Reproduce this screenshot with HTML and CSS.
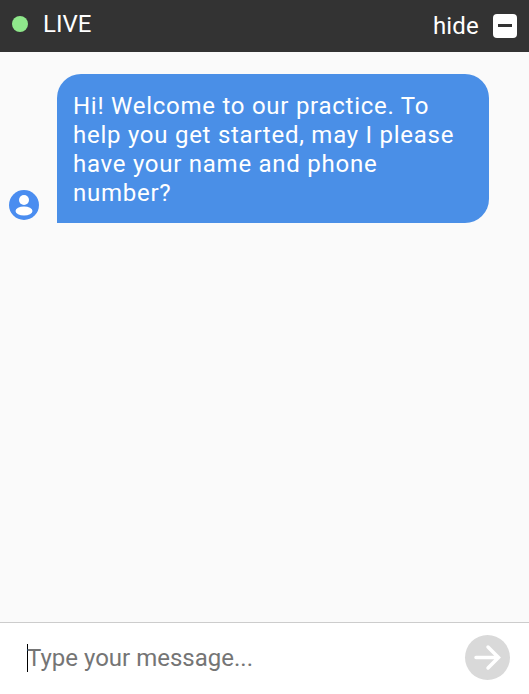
FILE: index.html
```html
<!DOCTYPE html>
<html lang="en">

<head>
    <meta charset="UTF-8">
    <title>Live chat</title>
<link rel="stylesheet" href="styles.css">
</head>
<body>
<div class="chat">
    <div class="topbar">
        <div class="status">
            <span class="dot"></span>
            <span class="live">LIVE</span>
        </div>
        <div class="hide">
            <span class="hide-text">hide</span>
            <span class="hide-btn"><span class="minus"></span></span>
        </div>
    </div>
    <div class="messages">
        <div class="message">
            <svg class="avatar" width="30" height="30" viewBox="0 0 30 30">
                <circle cx="15" cy="15" r="15" fill="#4a8df0"/>
                <circle cx="15" cy="10" r="5" fill="#fff"/>
                <ellipse cx="15" cy="21" rx="8.500" ry="4.500" fill="#fff"/>
            </svg>
            <div class="bubble">Hi! Welcome to our practice. To help you get started, may I please have your name and phone number?</div>
        </div>
    </div>
    <div class="composer">
        <div class="input"><span class="caret"></span><span class="placeholder">Type your message...</span></div>
        <div class="send">
            <svg width="45" height="45" viewBox="0 0 45 45">
                <path d="M11 22.500H33M23 12L33.500 22.500L23 33" fill="none" stroke="#fff" stroke-width="3.500" stroke-linecap="round"/>
            </svg>
        </div>
    </div>
</div>
</body>

</html>
```

FILE: styles.css
```css
html, body {
    margin: 0;
    padding: 0;
}
body {
    font-family: Roboto, "Liberation Sans", sans-serif;
}
.chat {
    display: flex;
    flex-direction: column;
    width: 529px;
    height: 694px;
    background-color: #fafafa;
}
.topbar {
    display: flex;
    justify-content: space-between;
    align-items: center;
    height: 52px;
    padding: 0 12px;
    box-sizing: border-box;
    background-color: #333333;
    color: #ffffff;
}
.status {
    display: flex;
    align-items: center;
    padding-bottom: 4px;
}
.dot {
    width: 16px;
    height: 16px;
    border-radius: 50%;
    background-color: #8fe88b;
}
.live {
    margin-left: 15px;
    font-size: 24px;
    line-height: 28px;
}
.hide {
    display: flex;
    align-items: center;
}
.hide-text {
    font-size: 24px;
    letter-spacing: 0.2px;
}
.hide-btn {
    display: flex;
    justify-content: center;
    align-items: center;
    width: 24px;
    height: 24px;
    margin-left: 14px;
    margin-bottom: 1px;
    border-radius: 4px;
    background-color: #ffffff;
}
.minus {
    width: 14px;
    height: 3px;
    background-color: #333333;
}
.messages {
    flex: 1;
    padding: 22px 40px 0 9px;
}
.message {
    display: flex;
    align-items: flex-end;
}
.avatar {
    flex-shrink: 0;
    margin-right: 18px;
    margin-bottom: 3px;
}
.bubble {
    width: 432px;
    box-sizing: border-box;
    padding: 18px 16px 15px;
    border-radius: 24px 24px 24px 0;
    background-color: #4a8fe7;
    color: #ffffff;
    font-size: 24px;
    line-height: 29px;
    letter-spacing: 0.74px;
}
.composer {
    display: flex;
    justify-content: space-between;
    align-items: center;
    height: 72px;
    padding: 0 19px 2px 27px;
    box-sizing: border-box;
    border-top: 1px solid #cccccc;
    background-color: #ffffff;
}
.input {
    display: flex;
    align-items: center;
}
.caret {
    width: 1px;
    height: 28px;
    margin-right: -1px;
    background-color: #000000;
}
.placeholder {
    font-size: 24px;
    color: #757575;
}
.send {
    width: 45px;
    height: 45px;
    border-radius: 50%;
    background-color: #d9d9d9;
}
```
